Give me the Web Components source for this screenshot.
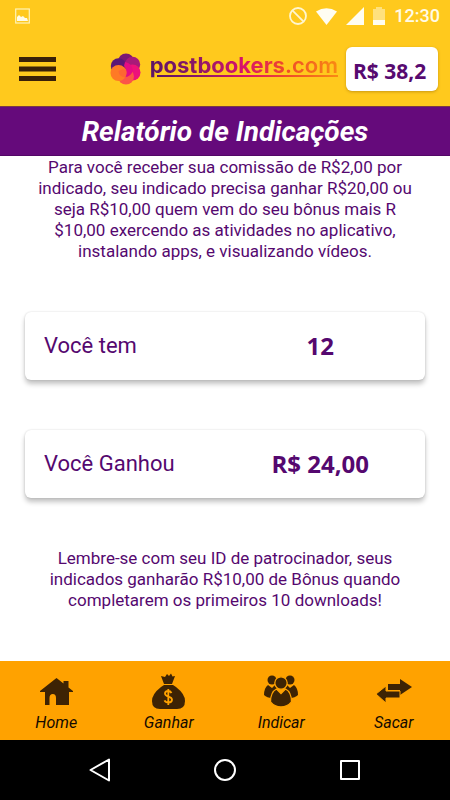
<!DOCTYPE html>
<html lang="pt-BR">
<head>
<meta charset="utf-8">
<meta name="viewport" content="width=device-width, initial-scale=1">
<title>Relatório de Indicações</title>
<style>
  body { margin: 0; background: #fff; font-family: Roboto, sans-serif; color: #55086f; }
</style>
</head>
<body>
<referral-page></referral-page>

<script>
const define = (name, html) => {
  const template = document.createElement('template');
  template.innerHTML = html;
  customElements.define(name, class extends HTMLElement {
    constructor() {
      super();
      this.attachShadow({ mode: 'open' }).append(template.content.cloneNode(true));
    }
  });
};

define('status-bar', `
  <style>
    :host { display: flex; align-items: center; height: 32px; padding: 0 10px 0 15px; background: #ffc91d; color: #fffbe6; }
    .spacer { flex: 1; }
    svg { display: block; }
    .right { display: flex; align-items: center; gap: 9px; }
    time { font-size: 18px; line-height: 20px; font-weight: 500; }
  </style>
  <svg width="15" height="16" viewBox="0 0 15 16" aria-hidden="true">
    <rect x=".7" y="1" width="13.6" height="14" fill="none" stroke="#fff3b8" stroke-width="1.2"/>
    <path d="M2 13V9l2-2 2 2 2-1 2 2 2 0 1 3z" fill="#fffbe6"/>
  </svg>
  <span class="spacer"></span>
  <div class="right">
    <svg width="18" height="18" viewBox="0 0 18 18" fill="none" stroke="#fff6cf" stroke-width="1.8" aria-hidden="true"><circle cx="9" cy="9" r="8"/><path d="M3.4 3.4l11.2 11.2"/></svg>
    <svg width="21" height="17" viewBox="0 0 21 17" aria-hidden="true"><path d="M0 3.5Q10.500 -3 21 3.500L10.500 17z" fill="#fffdf2"/></svg>
    <svg width="18" height="18" viewBox="0 0 18 18" aria-hidden="true"><path d="M0 18L18 0v18z" fill="#fffdf2"/></svg>
    <svg width="12" height="18" viewBox="0 0 12 18" aria-hidden="true"><path d="M0 2h3V0h6v2h3v11H0z" fill="#ffe17d"/><path d="M0 13h12v5H0z" fill="#fffdf2"/></svg>
    <time>12:30</time>
  </div>
`);

define('brand-logo', `
  <style>
    :host {
      --ink: linear-gradient(90deg, #5b1468, #8d1767 25%, #d9126b 50%, #ef4a2a 72%, #f98a12);
      display: flex; align-items: center; gap: 9px;
    }
    svg { display: block; flex: none; }
    .word {
      font: 700 22px/26px Inter, sans-serif; white-space: nowrap; padding-bottom: 8px;
      background: var(--ink); -webkit-background-clip: text; background-clip: text; color: transparent;
    }
    .com { font-weight: 600; }
    .wrap { display: grid; }
    .wrap > * { grid-area: 1 / 1; }
    .line { align-self: end; height: 2px; margin: 0 0 9px 7px; background: var(--ink); }
  </style>
  <svg width="31" height="32" viewBox="0 0 31 32" aria-hidden="true">
    <circle cx="16" cy="8.500" r="8" fill="#7b1874"/>
    <circle cx="8.500" cy="13" r="7.700" fill="#5b1776"/>
    <circle cx="22.500" cy="11.500" r="7.700" fill="#a81a79"/>
    <circle cx="22.500" cy="19.500" r="8" fill="#ed127a"/>
    <circle cx="16" cy="23.500" r="8" fill="#fb5548"/>
    <path d="M15 9q7 1 8 9-3 6-8 6 3-7-1-11z" fill="#e50c83"/>
    <circle cx="8.500" cy="20" r="8" fill="#ff7a25"/>
    <path d="M8.500 18q5-3 7.500-1 1.500 4-1 7.600-6-1-6.500-6.600z" fill="#fb5a3c" opacity=".6"/>
  </svg>
  <span class="wrap"><span class="word">postbookers<span class="com">.com</span></span><span class="line"></span></span>
`);

define('app-header', `
  <style>
    :host { display: flex; align-items: center; justify-content: space-between; height: 74px; padding: 0 12px 0 19px; background: #ffc91d; }
    button { border: 0; padding: 0; background: none; display: grid; cursor: pointer; }
    brand-logo { margin-left: auto; margin-right: 8px; }
    output {
      display: block; box-sizing: border-box; width: 92px; padding: 10px 7px 6px; border-radius: 6px;
      background: #fff; box-shadow: 0 1px 3px rgba(120, 80, 0, .4);
      font: 700 21px/28px "Open Sans", sans-serif; white-space: nowrap; color: #570a70; margin-bottom: 1px;
    }
  </style>
  <button type="button" aria-label="Menu"><svg width="37" height="24" viewBox="0 0 37 24" fill="#3a2008"><path d="M0 0h37v5H0zM0 9.500h37v5H0zM0 19h37v5H0z"/></svg></button>
  <brand-logo></brand-logo>
  <output aria-label="Saldo">R$ 38,2</output>
`);

define('page-title', `
  <style>
    :host { display: block; background: #650a7b; border-top: 1px solid #7b3a45; border-bottom: 1px solid #530767; color: #fff; }
    h1 { margin: 0; padding: 9px 0 7px; font: italic 700 28px/32px Roboto, sans-serif; text-align: center; }
  </style>
  <h1><slot></slot></h1>
`);

define('info-text', `
  <style>
    :host { display: block; padding: 0 32px; }
    p { margin: 0; font-size: 17px; line-height: 21px; text-align: center; }
  </style>
  <p><slot></slot></p>
`);

define('stat-card', `
  <style>
    :host {
      display: grid; grid-template-columns: 9fr 11fr; align-items: center; margin: 0 25px; padding: 18px 0 18px 19px;
      border-radius: 6px; background: #fff; box-shadow: 0 4px 5px rgba(0, 0, 0, .24), 0 0 2px rgba(0, 0, 0, .16);
    }
    .label { font-size: 22px; line-height: 32px; white-space: nowrap; }
    .value { font: 700 24px/32px "Open Sans", sans-serif; text-align: center; white-space: nowrap; }
  </style>
  <span class="label"><slot></slot></span>
  <span class="value"><slot name="value"></slot></span>
`);

define('nav-item', `
  <style>
    :host { display: block; flex: 1; }
    a { display: grid; justify-items: center; gap: 4px; color: #140a00; text-decoration: none; font: italic 400 16px/20px Roboto, sans-serif; }
    .icon { display: grid; place-items: center; height: 36px; color: #3d2304; }
  </style>
  <a href="#"><span class="icon"><slot name="icon"></slot></span><slot></slot></a>
`);

define('bottom-nav', `
  <style>
    :host { display: block; background: #ffa200; }
    nav { display: flex; padding: 12px 0 7px; }
    svg { display: block; fill: currentColor; }
  </style>
  <nav>
    <nav-item><svg slot="icon" width="33" height="27" viewBox="0 0 33 27"><path d="M16.500 0l7 5.500V3h5v6.500L33 13v1h-4v13H16v-7q0-4-3.200-4T9.500 20v7H5V14H0v-1z"/></svg>Home</nav-item>
    <nav-item><svg slot="icon" width="33" height="36" viewBox="0 0 33 36"><path d="M9 3l4 1 2-3 2 2 2-2.500L20.500 3.500 23 3l-3 8h-8z"/><path d="M12 12h9l3 2q9 7 9 14 0 8-8 8H8q-8 0-8-8 0-7 9-14z"/><path d="M19.500 20q-1-2-3.500-2-3 0-3 2.600 0 2 3.500 3t3.500 3.200q0 2.700-3.500 2.700-3 0-4-2.200M16.300 16v16" fill="none" stroke="#ffa200" stroke-width="1.800"/></svg>Ganhar</nav-item>
    <nav-item><svg slot="icon" width="34" height="32" viewBox="0 0 34 32"><circle cx="8" cy="5" r="4.500"/><circle cx="26" cy="5" r="4.500"/><path d="M4 10l4 3 3-3 2 3-5 10q-5 0-8-3 0-7 4-10zM30 10l-4 3-3-3-2 3 5 10q5 0 8-3 0-7-4-10z"/><g stroke="#ffa200" stroke-width="1.300"><circle cx="17" cy="8" r="6.200"/><path d="M12.500 14l4.500 4.500L21.500 14q6 3 6 13-4 5-10.500 5t-10.500-5q0-10 6-13z"/></g></svg>Indicar</nav-item>
    <nav-item><svg slot="icon" width="36" height="24" viewBox="0 0 36 24"><path d="M12 5h12V0l12 8-12 8v-5H12z"/><path d="M0 15L10 7v5h14v7H10v5z" stroke="#ffa200" stroke-width="1"/></svg>Sacar</nav-item>
  </nav>
`);

define('system-bar', `
  <style>
    :host { display: grid; grid-template-columns: repeat(3, 125px); justify-content: center; align-items: center; height: 60px; background: #000; }
    button { justify-self: center; display: grid; border: 0; padding: 0; background: none; }
    svg { fill: none; stroke: #fff; stroke-width: 2; stroke-linejoin: round; }
  </style>
  <button type="button" aria-label="Voltar"><svg width="22" height="24" viewBox="0 0 22 24"><path d="M20 1.500v21L1.500 12z"/></svg></button>
  <button type="button" aria-label="Início"><svg width="24" height="24" viewBox="0 0 24 24"><circle cx="12" cy="12" r="10"/></svg></button>
  <button type="button" aria-label="Recentes"><svg width="20" height="20" viewBox="0 0 20 20"><path d="M1 1h18v18H1z"/></svg></button>
`);

define('referral-page', `
  <style>
    :host { display: flex; flex-direction: column; min-height: 100vh; }
    main { flex: 1; display: flex; flex-direction: column; gap: 50px; padding: 1px 0 48px; }
  </style>
  <header><status-bar></status-bar><app-header></app-header></header>
  <page-title>Relatório de Indicações</page-title>
  <main>
    <info-text>Para você receber sua comissão de R$2,00 por indicado, seu indicado precisa ganhar R$20,00 ou seja R$10,00 quem vem do seu bônus mais R&#8203;$10,00 exercendo as atividades no aplicativo, instalando apps, e visualizando vídeos.</info-text>
    <stat-card>Você tem<span slot="value">12</span></stat-card>
    <stat-card>Você Ganhou<span slot="value">R$ 24,00</span></stat-card>
    <info-text>Lembre-se com seu ID de patrocinador, seus indicados ganharão R$10,00 de Bônus quando completarem os primeiros 10 downloads!</info-text>
  </main>
  <bottom-nav></bottom-nav>
  <system-bar></system-bar>
`);
</script>
</body>
</html>
